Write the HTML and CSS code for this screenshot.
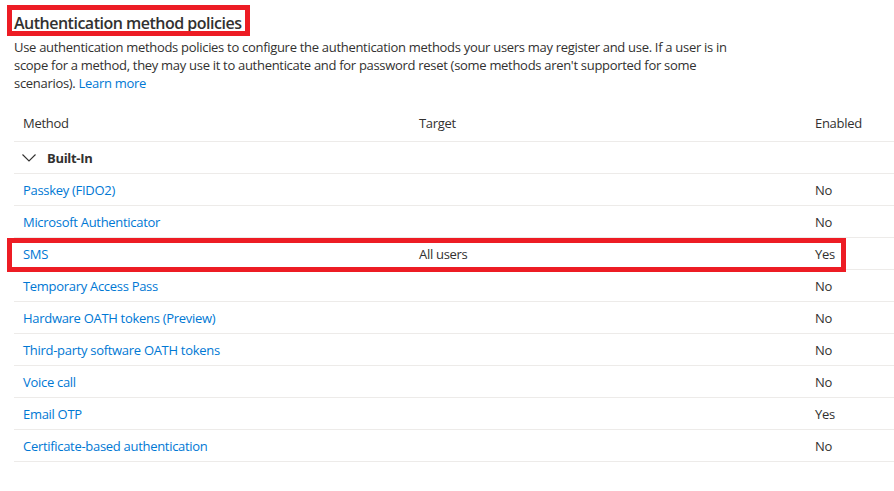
FILE: index.html
```html
<!DOCTYPE html>
<html lang="en">
<head>
<meta charset="utf-8">
<title>Authentication method policies</title>
<link rel="stylesheet" href="styles.css">
</head>
<body>
<div class="page">
  <h1 class="title">Authentication method policies</h1>
  <p class="desc">Use authentication methods policies to configure the authentication methods your users may register and use. If a user is in scope for a method, they may use it to authenticate and for password reset (some methods aren't supported for some scenarios). <a class="link" href="#">Learn more</a></p>

  <div class="table">
    <div class="row head">
      <div class="cell">Method</div>
      <div class="cell">Target</div>
      <div class="cell">Enabled</div>
    </div>
    <div class="row group">
      <div class="cell group-cell">
        <svg class="chev" width="14" height="8" viewBox="0 0 14 8"><polyline points="0.5,0.5 7,7 13.5,0.5" fill="none" stroke="#323130" stroke-width="1.1"/></svg>
        <span>Built-In</span>
      </div>
      <div class="cell"></div>
      <div class="cell"></div>
    </div>
    <div class="row"><div class="cell"><a class="link" href="#">Passkey (FIDO2)</a></div><div class="cell"></div><div class="cell">No</div></div>
    <div class="row"><div class="cell"><a class="link" href="#">Microsoft Authenticator</a></div><div class="cell"></div><div class="cell">No</div></div>
    <div class="row"><div class="cell"><a class="link" href="#">SMS</a></div><div class="cell">All users</div><div class="cell">Yes</div></div>
    <div class="row"><div class="cell"><a class="link" href="#">Temporary Access Pass</a></div><div class="cell"></div><div class="cell">No</div></div>
    <div class="row"><div class="cell"><a class="link" href="#">Hardware OATH tokens (Preview)</a></div><div class="cell"></div><div class="cell">No</div></div>
    <div class="row"><div class="cell"><a class="link" href="#">Third-party software OATH tokens</a></div><div class="cell"></div><div class="cell">No</div></div>
    <div class="row"><div class="cell"><a class="link" href="#">Voice call</a></div><div class="cell"></div><div class="cell">No</div></div>
    <div class="row"><div class="cell"><a class="link" href="#">Email OTP</a></div><div class="cell"></div><div class="cell">Yes</div></div>
    <div class="row"><div class="cell"><a class="link" href="#">Certificate-based authentication</a></div><div class="cell"></div><div class="cell">No</div></div>
  </div>

  <div class="mark mark-title"></div>
  <div class="mark mark-sms"></div>
</div>
</body>
</html>
```

FILE: styles.css
```css
html, body {
  margin: 0;
  padding: 0;
  background: #ffffff;
}
body {
  width: 894px;
  height: 491px;
  overflow: hidden;
  font-family: "Open Sans", "Noto Sans", "Liberation Sans", sans-serif;
  font-size: 13px;
  letter-spacing: -0.3px;
  color: #323130;
}
.page {
  position: relative;
  padding: 12px 0 0 14px;
}
.title {
  margin: 0;
  font-size: 16px;
  font-weight: 600;
  line-height: 22px;
  letter-spacing: -0.5px;
  color: #323130;
}
.desc {
  margin: 4px 0 0 0;
  width: 736px;
  line-height: 18px;
}
.link {
  color: #0078d4;
  text-decoration: none;
}
.table {
  margin-top: 17px;
  width: 1188px;
}
.row {
  display: grid;
  grid-template-columns: 396px 396px 396px;
  border-bottom: 1px solid #edebe9;
  height: 31px;
  align-items: center;
}
.row.head {
  align-items: start;
  height: 32px;
}
.row.head .cell {
  padding-top: 5px;
  line-height: 18px;
}
.cell {
  padding-left: 9px;
  white-space: nowrap;
  line-height: 18px;
}
.group-cell {
  display: flex;
  align-items: center;
  gap: 11px;
  font-weight: 700;
  padding-left: 8px;
}
.chev {
  display: block;
}
.mark {
  position: absolute;
  border: 5px solid #ed1c24;
  box-sizing: border-box;
}
.mark-title {
  left: 7px;
  top: 5px;
  width: 243px;
  height: 31px;
}
.mark-sms {
  left: 7px;
  top: 238px;
  width: 839px;
  height: 34px;
}
```
